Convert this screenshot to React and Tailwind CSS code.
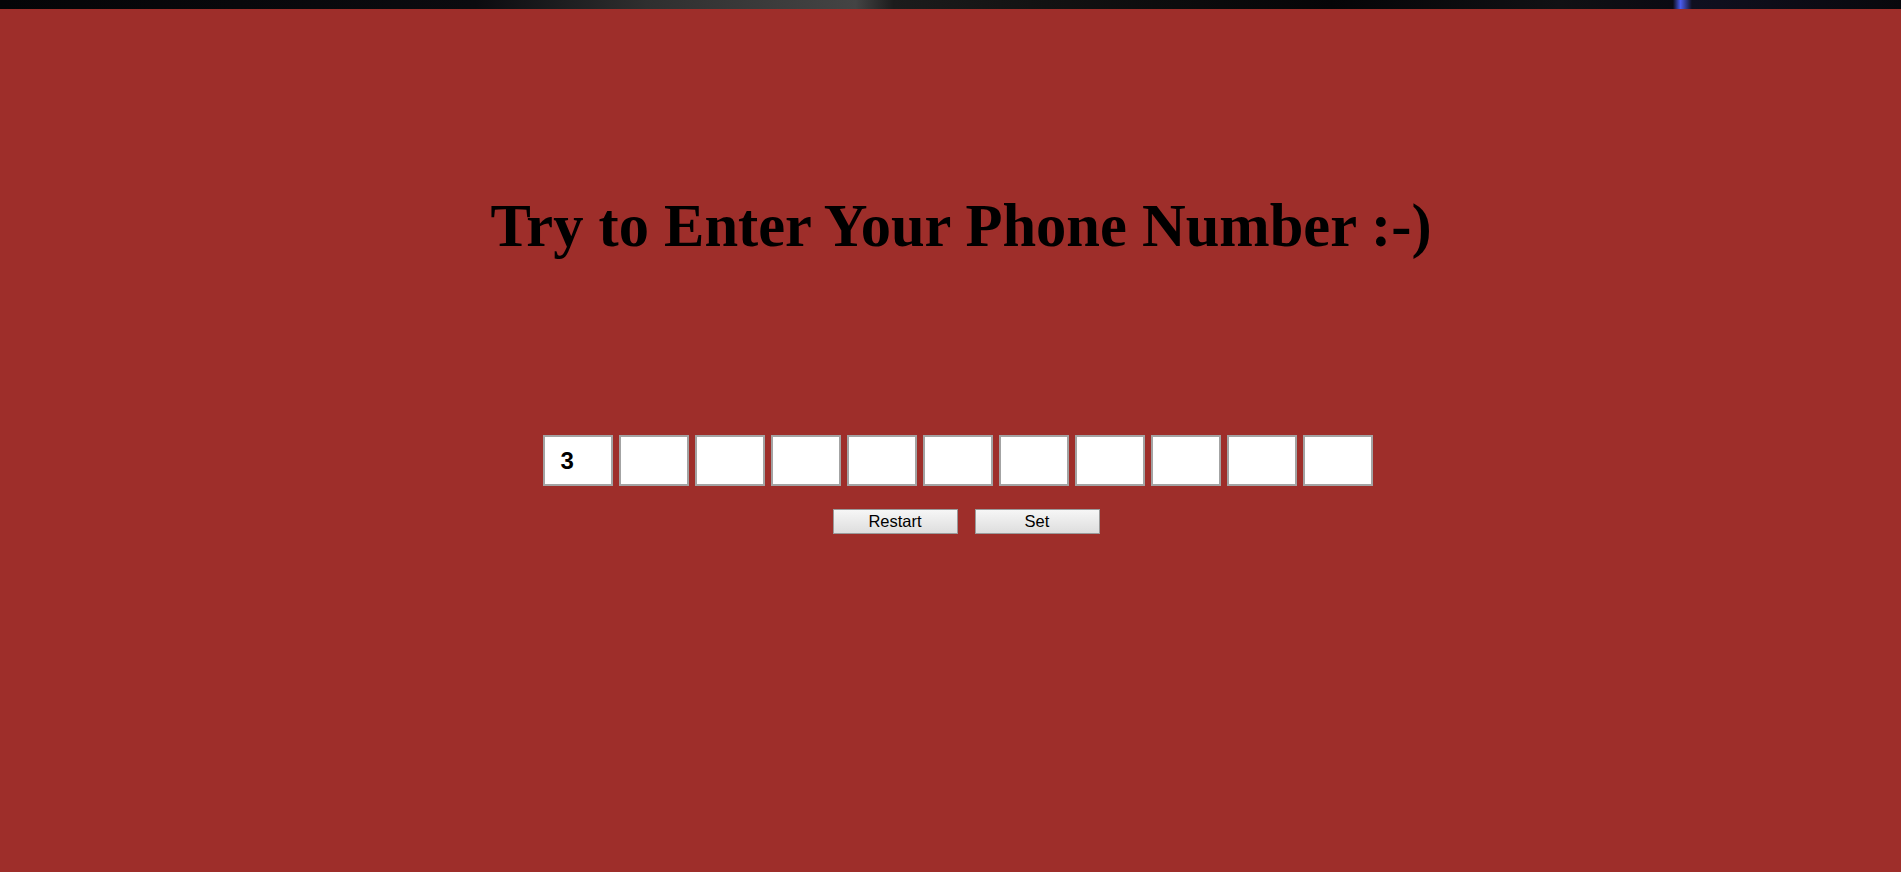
import React from "react";

export default function App() {
  const boxes = Array.from({ length: 11 });
  return (
    <div className="min-h-[872px] w-full bg-[#9e2e2a] flex flex-col">
      <div className="h-[9px] w-full bg-[linear-gradient(90deg,#050507_0%,#0b0b0f_25%,#2f2f2f_34%,#444444_45%,#1c1c1c_47%,#121212_55%,#050507_70%,#111114_82%,#0a0a12_88%,#4a5cf0_88.4%,#101020_89%,#08080c_100%)]" />
      <h1 className="mt-[181px] pl-[21px] text-center text-[60.5px] leading-[72px] font-bold text-black [font-family:'Liberation_Serif','Times_New_Roman',serif]">
        Try to Enter Your Phone Number :-)
      </h1>
      <div className="mt-[173px] flex justify-center gap-[6px] pl-[14px]">
        {boxes.map((_, i) => (
          <div
            key={i}
            className="w-[70px] h-[51px] bg-white border-2 border-[#a3a3a3] flex items-center pl-[16px] text-[24px] font-bold text-black [font-family:'Liberation_Sans',Arial,sans-serif]"
          >
            {i === 0 ? "3" : ""}
          </div>
        ))}
      </div>
      <div className="mt-[23px] flex justify-center gap-[17px] pl-[31px]">
        {["Restart", "Set"].map((t) => (
          <button
            key={t}
            className="w-[125px] h-[25px] border border-[#9a9a9a] bg-[linear-gradient(#f6f6f6,#dedede)] text-[16.5px] text-black leading-none [font-family:'Liberation_Sans',Arial,sans-serif]"
          >
            {t}
          </button>
        ))}
      </div>
    </div>
  );
}
